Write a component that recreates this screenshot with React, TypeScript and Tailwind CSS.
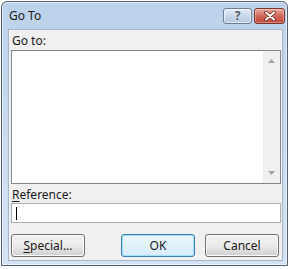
import React from "react"

function HelpButton() {
  return (
    <div className="flex h-[16px] w-[29px] items-center justify-center rounded-[3px] border border-[#6d7d92] bg-gradient-to-b from-[#e4edf7] via-[#c9d8ea] to-[#b6c8de] shadow-[inset_0_0_0_1px_rgba(255,255,255,0.6)]">
      <span className="text-[12px] font-bold leading-none text-[#4a5566] [text-shadow:0_0_1px_#fff]">?</span>
    </div>
  )
}

function CloseButton() {
  return (
    <div className="flex h-[16px] w-[31px] items-center justify-center rounded-[3px] border border-[#7a3328] bg-gradient-to-b from-[#e9a99b] via-[#d0675a] to-[#c0463a] shadow-[inset_0_0_0_1px_rgba(255,255,255,0.35)]">
      <svg width="12" height="10" viewBox="0 0 12 10">
        <path d="M2 1.5 L10 8.5 M10 1.5 L2 8.5" stroke="#6b2a22" strokeWidth="3.6" strokeLinecap="round" />
        <path d="M2 1.5 L10 8.5 M10 1.5 L2 8.5" stroke="#ffffff" strokeWidth="2" strokeLinecap="round" />
      </svg>
    </div>
  )
}

function DlgButton({ children, primary }: { children: React.ReactNode; primary?: boolean }) {
  return (
    <div
      className={
        primary
          ? "flex h-[23px] w-[74px] items-center justify-center rounded-[3px] border border-[#3c7fb1] bg-gradient-to-b from-[#eaf6fd] to-[#d7ecf9] shadow-[inset_0_0_0_1px_#9ee0fa] text-[12px] text-[#1a1a1a]"
          : "flex h-[23px] w-[74px] items-center justify-center rounded-[3px] border border-[#707070] bg-gradient-to-b from-[#f2f2f2] via-[#ebebeb] to-[#cfcfcf] shadow-[inset_0_0_0_1px_#fcfcfc] text-[12px] text-[#1a1a1a]"
      }
    >
      {children}
    </div>
  )
}

export default function App() {
  return (
    <div className="h-[269px] w-[291px] bg-white pl-[1px] pt-[1px] font-['Noto_Sans',sans-serif]">
      <div className="flex h-[265px] w-[287px] flex-col rounded-t-[6px] border border-[#56606d] bg-gradient-to-b from-[#bcd2ea] to-[#d3e2f2] shadow-[inset_0_0_0_1px_rgba(255,255,255,0.55)]">
        {/* title bar */}
        <div className="flex h-[27px] items-start justify-between">
          <span className="pl-[7px] pt-[6px] text-[12px] leading-[16px] text-[#1a1a1a]">Go To</span>
          <div className="flex gap-[2px] pr-[2px] pt-[6px]">
            <HelpButton />
            <CloseButton />
          </div>
        </div>

        {/* client area */}
        <div className="ml-[6px] mr-[4px] flex h-[232px] flex-col border border-[#a7b7c9] bg-[#f0f0f0]">
          <div className="pl-[3px] pt-[3px] text-[12px] leading-[16px] text-[#1a1a1a]">Go to:</div>
          <div className="ml-[2px] mt-[1px] flex h-[134px] w-[270px] border border-[#828790] bg-white">
            <div className="flex-1" />
            <div className="flex w-[17px] flex-col items-center justify-between bg-[#f0f0f0] py-[8px]">
              <svg width="7" height="4" viewBox="0 0 7 4">
                <path d="M0 4 L3.5 0 L7 4 Z" fill="#a3a3a3" />
              </svg>
              <svg width="7" height="4" viewBox="0 0 7 4">
                <path d="M0 0 L3.5 4 L7 0 Z" fill="#a3a3a3" />
              </svg>
            </div>
          </div>
          <div className="pl-[3px] pt-[3px] text-[12px] leading-[16px] text-[#1a1a1a]">
            <span className="underline underline-offset-2">R</span>eference:
          </div>
          <div className="ml-[2px] flex h-[20px] w-[270px] items-center border border-[#abadb3] bg-white pl-[4px]">
            <div className="h-[13px] w-[1px] bg-black" />
          </div>
          <div className="ml-[2px] mt-[11px] flex items-center">
            <DlgButton>
              <span>
                <span className="underline underline-offset-2">S</span>pecial...
              </span>
            </DlgButton>
            <div className="ml-[36px]">
              <DlgButton primary>OK</DlgButton>
            </div>
            <div className="ml-[10px]">
              <DlgButton>Cancel</DlgButton>
            </div>
          </div>
        </div>
      </div>
    </div>
  )
}
